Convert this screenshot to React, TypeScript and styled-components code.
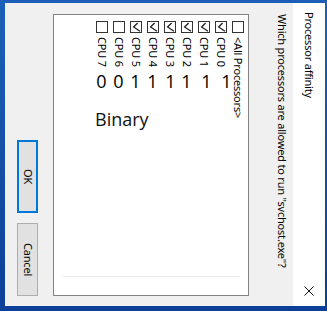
import React from "react";
import styled, { createGlobalStyle } from "styled-components";

const GlobalStyle = createGlobalStyle`
  html, body {
    margin: 0;
    padding: 0;
  }
  body {
    width: 327px;
    height: 311px;
    overflow: hidden;
    font-family: "Noto Sans", "Open Sans", sans-serif;
    color: #000;
  }
`;

const Desktop = styled.div`
  width: 327px;
  height: 311px;
  box-sizing: border-box;
  padding: 3px 2px 5px 5px;
  background: linear-gradient(180deg, #1c5fb8 0%, #0c3f98 100%);
`;

// the whole dialog lies on its side: vertical-rl turns it 90deg clockwise
const Dialog = styled.div`
  writing-mode: vertical-rl;
  width: 320px;
  height: 303px;
  display: flex;
  flex-direction: column;
`;

const TitleBar = styled.div`
  width: 32px;
  background: #fff;
  display: flex;
  flex-direction: row;
  align-items: center;
  justify-content: space-between;
  padding: 9px 0 10px 0;
  box-sizing: border-box;
  font-size: 11px;
  line-height: 16px;
  letter-spacing: -0.2px;
`;

const Close = styled.svg`
  width: 10px;
  height: 10px;
  display: block;
`;

const Body = styled.div`
  flex: 1;
  background: #f0f0f0;
  display: flex;
  flex-direction: column;
  padding: 11px 3px 10px 12px;
  box-sizing: border-box;
  font-size: 11px;
  letter-spacing: -0.2px;
`;

const Question = styled.div`
  line-height: 16px;
  white-space: nowrap;
`;

const ListBox = styled.div`
  position: relative;
  margin-right: 25px;
  width: 196px;
  flex: none;
  box-sizing: border-box;
  border: 1px solid #828282;
  background: #fff;
  padding: 6px 2px 0 0;
  display: flex;
  flex-direction: column;

  &::after {
    content: "";
    position: absolute;
    left: 9px;
    right: 8px;
    top: 261px;
    height: 1px;
    background: #ececec;
  }
`;

const Item = styled.div`
  width: 17px;
  flex: none;
  display: flex;
  flex-direction: row;
  align-items: center;
`;

const Box = styled.svg`
  width: 12px;
  height: 12px;
  display: block;
  flex: none;
`;

const Label = styled.div`
  margin-top: 4px;
  min-height: 35px;
  line-height: 14px;
  white-space: nowrap;
`;

const Digit = styled.div<{ $shift: number }>`
  writing-mode: horizontal-tb;
  font-family: "Open Sans", "Noto Sans", sans-serif;
  font-size: 18px;
  line-height: 18px;
  letter-spacing: 0;
  margin-left: ${(p) => p.$shift * 2}px;
`;

const Annotation = styled.div`
  writing-mode: horizontal-tb;
  position: absolute;
  left: 41px;
  top: 95px;
  font-family: "Open Sans", "Noto Sans", sans-serif;
  font-size: 18px;
  line-height: 18px;
  letter-spacing: 0;
  color: #111;
`;

const Buttons = styled.div`
  margin-right: 15px;
  width: 21px;
  display: flex;
  flex-direction: row;
  justify-content: flex-end;
  gap: 10px;
`;

const Button = styled.div<{ $default?: boolean }>`
  width: 21px;
  height: 73px;
  box-sizing: border-box;
  background: #e1e1e1;
  border: ${(p) => (p.$default ? "2px solid #0078d7" : "1px solid #adadad")};
  display: flex;
  align-items: center;
  justify-content: center;
  font-size: 11px;
  line-height: 14px;
`;

const CheckBox = ({ checked }: { checked: boolean }) => (
  <Box viewBox="0 0 12 12">
    <rect x="0.5" y="0.5" width="11" height="11" fill="#fff" stroke="#333" />
    {checked && (
      <polyline points="7.6,2 3.6,6 10,10.3" fill="none" stroke="#222" strokeWidth="1.3" />
    )}
  </Box>
);

const cpus = [
  { name: "CPU 0", on: true, bit: "1", shift: 6 },
  { name: "CPU 1", on: true, bit: "1", shift: 3 },
  { name: "CPU 2", on: true, bit: "1", shift: 0 },
  { name: "CPU 3", on: true, bit: "1", shift: 1 },
  { name: "CPU 4", on: true, bit: "1", shift: 0 },
  { name: "CPU 5", on: true, bit: "1", shift: 0 },
  { name: "CPU 6", on: false, bit: "0", shift: 0 },
  { name: "CPU 7", on: false, bit: "0", shift: 0 },
];

export default function App() {
  return (
    <>
      <GlobalStyle />
      <Desktop>
        <Dialog>
          <TitleBar>
            <span>Processor affinity</span>
            <Close viewBox="0 0 10 10">
              <path d="M0.5 0.5 L9.5 9.5 M9.5 0.5 L0.5 9.5" stroke="#111" strokeWidth="1" />
            </Close>
          </TitleBar>
          <Body>
            <Question>Which processors are allowed to run "svchost.exe"?</Question>
            <ListBox>
              <Item>
                <CheckBox checked={false} />
                <Label>&lt;All Processors&gt;</Label>
              </Item>
              {cpus.map((c) => (
                <Item key={c.name}>
                  <CheckBox checked={c.on} />
                  <Label>{c.name}</Label>
                  <Digit $shift={c.shift}>{c.bit}</Digit>
                </Item>
              ))}
              <Annotation>Binary</Annotation>
            </ListBox>
            <Buttons>
              <Button $default>OK</Button>
              <Button>Cancel</Button>
            </Buttons>
          </Body>
        </Dialog>
      </Desktop>
    </>
  );
}
